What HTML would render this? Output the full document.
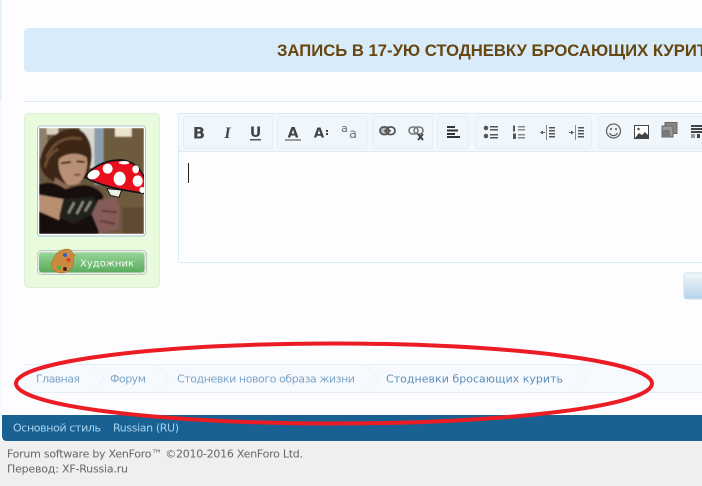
<!DOCTYPE html>
<html>
<head>
<meta charset="utf-8">
<style>
html,body{margin:0;padding:0;width:702px;height:486px;overflow:hidden;background:#fdfdff}
svg{display:block}
text{font-family:"DejaVu Sans","Liberation Sans",sans-serif}
</style>
</head>
<body>
<svg width="702" height="486" viewBox="0 0 702 486" xmlns="http://www.w3.org/2000/svg">
<defs>
<linearGradient id="send" x1="0" y1="0" x2="0" y2="1"><stop offset="0" stop-color="#f2f8fc"/><stop offset="1" stop-color="#b5d3ea"/></linearGradient>
<linearGradient id="grn" x1="0" y1="0" x2="0" y2="1"><stop offset="0" stop-color="#96d596"/><stop offset="1" stop-color="#59ab5c"/></linearGradient>
<clipPath id="ph"><rect x="12" y="12" width="315" height="318"/></clipPath>
<filter id="bl" x="-5%" y="-5%" width="110%" height="110%"><feGaussianBlur stdDeviation="2"/></filter>
</defs>

<rect width="702" height="486" fill="#fdfdff"/>
<rect x="0" y="0" width="2" height="100" fill="#e4f2fb"/>
<rect x="0" y="100" width="2" height="341" fill="#f3f9fd"/>

<!-- title -->
<rect x="24" y="28" width="690" height="44" rx="4" fill="#d7ebf9"/>
<text x="277" y="56" font-size="16.500" font-weight="bold" fill="#674610" style="font-family:'Liberation Sans',sans-serif" textLength="442" lengthAdjust="spacingAndGlyphs">ЗАПИСЬ В 17-УЮ СТОДНЕВКУ БРОСАЮЩИХ КУРИТЬ</text>
<rect x="24" y="101" width="678" height="1" fill="#dcedf8"/>

<!-- avatar panel -->
<rect x="24.500" y="113.500" width="135" height="174" rx="5" fill="#e8fbdc" stroke="#deefd8"/>
<rect x="37.500" y="126" width="108" height="110" rx="3" fill="#fff" stroke="#a9c4d8"/>
<g transform="translate(35,124) scale(.33333)">
<g clip-path="url(#ph)">
<g filter="url(#bl)">
<rect x="12" y="12" width="315" height="318" fill="#67553c"/>
<rect x="12" y="12" width="25" height="90" fill="#8f7f68"/>
<rect x="35" y="12" width="35" height="20" fill="#d8d0bd"/>
<rect x="135" y="12" width="50" height="120" fill="#dcd9d0"/>
<rect x="178" y="12" width="28" height="170" fill="#8c9eac"/>
<rect x="206" y="12" width="121" height="318" fill="#6e5a3e"/>
<rect x="240" y="12" width="50" height="26" fill="#ece3cb"/>
<path d="M16 110C20 55 70 12 120 14C150 16 172 55 170 100C168 140 150 170 130 180L60 175C30 160 14 140 16 110Z" fill="#3c2718"/>
<path d="M35 100C55 55 90 35 140 45M30 130C35 100 50 85 70 75" stroke="#6c4d33" stroke-width="8" fill="none"/>
<path d="M72 105C95 85 130 85 155 100C160 130 150 165 130 180L100 185C80 165 66 135 72 105Z" fill="#b98f74"/>
<path d="M78 118l30-4M125 112l24 2" stroke="#3f2719" stroke-width="6"/>
<path d="M118 152l18 0" stroke="#7c4a3f" stroke-width="6"/>
<path d="M60 160L105 190L95 205L55 190Z" fill="#8f6a55"/>
<path d="M12 182C40 170 70 178 90 195L130 185C160 180 190 190 205 215L190 330H12Z" fill="#14110c"/>
<path d="M12 212L90 226L72 288L12 262Z" fill="#b98f72"/>
<path d="M85 226L178 218L185 245L170 270L115 300L72 280Z" fill="#22211c"/>
<path d="M100 268L118 235M125 270L145 232M150 262L168 232" stroke="#8d8e7f" stroke-width="7"/>
<path d="M190 228L245 220L255 260L250 315L195 330L170 270Z" fill="#865b58"/>
<path d="M200 260L245 265M195 290L240 300" stroke="#5a3a38" stroke-width="6"/>
<rect x="262" y="250" width="65" height="80" fill="#5f4c35"/>
</g>
<path d="M216 194L260 198L252 220L226 214Z" fill="#eef2e6" stroke="#1a1a1a" stroke-width="3"/>
<path d="M150 160C165 135 205 108 255 108C300 110 325 135 345 210C300 205 210 192 150 160Z" fill="#e8101c" stroke="#141414" stroke-width="5"/>
<ellipse cx="176" cy="152" rx="19" ry="13" fill="#fff" transform="rotate(-25 176 152)"/>
<ellipse cx="218" cy="134" rx="15" ry="15" fill="#fff"/>
<ellipse cx="254" cy="164" rx="18" ry="21" fill="#fff"/>
<ellipse cx="308" cy="171" rx="15" ry="17" fill="#fff"/>
<ellipse cx="302" cy="136" rx="10" ry="12" fill="#fff"/>
<ellipse cx="267" cy="116" rx="16" ry="5" fill="#fff"/>
<ellipse cx="322" cy="198" rx="9" ry="9" fill="#fff"/>
</g>
</g>

<!-- artist badge -->
<rect x="37.500" y="250.500" width="109" height="24" rx="4" fill="#e6eae4" stroke="#c3c9c3"/>
<rect x="39" y="252.500" width="105.500" height="20" rx="3" fill="url(#grn)"/>
<path d="M62 250C70 247 74 252 72 254C78 254 73 258 73 258C75 266 70 273 61 273C52 272 49 266 53 260C55 255 57 252 62 250Z" fill="#cb8a3e" stroke="#a8702e" stroke-width=".6"/>
<circle cx="65" cy="255" r="2" fill="#3a5ec0"/>
<circle cx="68.500" cy="260" r="2" fill="#dd3d34"/>
<circle cx="59" cy="267.500" r="2" fill="#44b84a"/>
<circle cx="65" cy="269" r="2" fill="#3a2a1e"/>
<text x="80" y="266.500" font-size="10" fill="#f4fbf4" textLength="54" lengthAdjust="spacing">Художник</text>

<!-- editor -->
<rect x="178.500" y="113.500" width="530" height="149" rx="2" fill="#fdfdff" stroke="#dcecf7"/>
<rect x="179" y="114" width="523" height="37" fill="#f3f8fd"/>
<rect x="179" y="151" width="523" height="1" fill="#dcecf7"/>
<g fill="#f0f7fc" stroke="#e2eff8">
<rect x="183.500" y="116.500" width="89" height="32" rx="3"/>
<rect x="277.500" y="116.500" width="89.500" height="32" rx="3"/>
<rect x="372.500" y="116.500" width="60" height="32" rx="3"/>
<rect x="437.500" y="116.500" width="31" height="32" rx="3"/>
<rect x="475.500" y="116.500" width="116" height="32" rx="3"/>
<rect x="598.500" y="116.500" width="120" height="32" rx="3"/>
</g>
<rect x="188" y="163" width="1" height="20" fill="#222"/>

<!-- toolbar icons -->
<g fill="#444">
<text x="199" y="138.500" font-size="16" font-weight="bold" text-anchor="middle">B</text>
<text x="227.500" y="138" font-size="16" font-weight="bold" font-style="italic" text-anchor="middle" style="font-family:'Liberation Serif',serif">I</text>
<text x="255.500" y="137" font-size="14" font-weight="bold" text-anchor="middle">U</text>
<rect x="250" y="139" width="11" height="1.500" fill="#555"/>
<text x="293" y="137.500" font-size="14" font-weight="bold" text-anchor="middle">A</text>
<rect x="285" y="139" width="16" height="2" fill="#999"/>
<text x="319" y="137.500" font-size="13.500" font-weight="bold" text-anchor="middle">A</text>
<rect x="326" y="130" width="2" height="2"/><rect x="326" y="133" width="2" height="2"/>
<text x="344.500" y="132" font-size="11" text-anchor="middle" fill="#666">a</text>
<text x="353" y="138" font-size="13" text-anchor="middle" fill="#777">a</text>
</g>
<g fill="none">
<rect x="380" y="127" width="9" height="7.500" rx="3.700" stroke="#555" stroke-width="1.800" fill="#bbb"/>
<rect x="386" y="127" width="9" height="7.500" rx="3.700" stroke="#555" stroke-width="1.800"/>
<path d="M384 130.800h7" stroke="#555" stroke-width="1.500"/>
<rect x="409" y="127" width="9" height="7" rx="3.500" stroke="#777" stroke-width="1.600"/>
<rect x="414" y="127" width="9" height="7" rx="3.500" stroke="#777" stroke-width="1.600"/>
<path d="M418 134l5 6M423 134l-5 6" stroke="#444" stroke-width="2"/>
</g>
<g fill="#333">
<rect x="447" y="126" width="8" height="2"/><rect x="447" y="129.500" width="11" height="2"/>
<rect x="447" y="133" width="8" height="2"/><rect x="447" y="136" width="13" height="2"/>
</g>
<g fill="#555">
<circle cx="486" cy="128" r="2.300"/><circle cx="486" cy="136" r="2.300"/>
<rect x="490" y="126" width="8" height="1.500"/><rect x="490" y="129" width="8" height="1.500"/>
<rect x="490" y="134" width="8" height="1.500"/><rect x="490" y="137" width="8" height="1.500"/>
<rect x="513" y="125.500" width="2" height="6"/><rect x="513" y="133.500" width="3" height="5.500"/>
<rect x="518" y="126" width="7" height="1.500" fill="#888"/><rect x="518" y="129" width="7" height="1.500" fill="#888"/>
<rect x="518" y="134" width="7" height="1.500" fill="#888"/><rect x="518" y="137" width="7" height="1.500" fill="#888"/>
<rect x="546" y="125" width="1" height="15" fill="#888"/>
<rect x="549" y="127" width="6" height="1.500"/><rect x="549" y="130" width="6" height="1.500"/><rect x="549" y="133" width="6" height="1.500"/><rect x="549" y="136" width="6" height="1.500"/>
<path d="M540 132.500l3-2v1.500h2v1h-2v1.500z"/>
<rect x="575" y="125" width="1" height="15" fill="#888"/>
<rect x="578" y="127" width="6" height="1.500"/><rect x="578" y="130" width="6" height="1.500"/><rect x="578" y="133" width="6" height="1.500"/><rect x="578" y="136" width="6" height="1.500"/>
<path d="M574 132.500l-3-2v1.500h-2v1h2v1.500z"/>
</g>
<g>
<circle cx="613.500" cy="131" r="7" fill="#eef2f5" stroke="#666" stroke-width="1.300"/>
<circle cx="611" cy="129" r="1" fill="#555"/><circle cx="616" cy="129" r="1" fill="#555"/>
<path d="M609.500 133c2 3.500 6 3.500 8 0" fill="none" stroke="#555" stroke-width="1.200"/>
<rect x="634.500" y="125.500" width="14" height="13" fill="#fff" stroke="#444"/>
<path d="M635 138l4-5 3 2 3-3 3 3v3z" fill="#444"/>
<circle cx="638.500" cy="129" r="1.300" fill="#555"/>
<rect x="665" y="122.500" width="12" height="11" fill="#888" stroke="#666"/>
<rect x="662" y="126" width="11" height="11" fill="#999" stroke="#666"/>
<rect x="662" y="130" width="8" height="7" fill="#777"/>
<rect x="691" y="125" width="11" height="2" fill="#444"/>
<rect x="691" y="128" width="11" height="2" fill="#444"/>
<rect x="691" y="131" width="11" height="2" fill="#444"/>
<rect x="691" y="134" width="4" height="4" fill="#999"/>
<rect x="697" y="134" width="3" height="4" fill="#444"/>
</g>

<!-- send button -->
<rect x="684" y="273" width="30" height="26" rx="3" fill="url(#send)" stroke="#d0dfeb"/>

<!-- breadcrumb -->
<rect x="24" y="364" width="678" height="28" rx="4" fill="#f6fafe"/>
<rect x="24" y="364" width="678" height="1" fill="#e8f1f9"/>
<rect x="24" y="392" width="678" height="1" fill="#e4eef7"/>
<g fill="none" stroke="#edf4fa" stroke-width="1">
<path d="M92 365L104 378L92 391"/>
<path d="M157 365L169 378L157 391"/>
<path d="M366 365L378 378L366 391"/>
<path d="M575 365L587 378L575 391"/>
</g>
<text x="36" y="382.500" font-size="11" fill="#7fa4c6" textLength="44" lengthAdjust="spacing">Главная</text>
<text x="110" y="382.500" font-size="11" fill="#7fa4c6" textLength="36" lengthAdjust="spacing">Форум</text>
<text x="177" y="382.500" font-size="11" fill="#7fa4c6" textLength="178" lengthAdjust="spacing">Стодневки нового образа жизни</text>
<text x="386" y="382.500" font-size="11" fill="#5f8db3" textLength="177" lengthAdjust="spacing">Стодневки бросающих курить</text>

<!-- footer -->
<rect x="0" y="441" width="702" height="45" fill="#efefef"/>
<path d="M2 415H702V441H7Q2 441 2 436Z" fill="#196193"/>
<text x="13" y="431.500" font-size="11" fill="#a9d3ef" textLength="88" lengthAdjust="spacing">Основной стиль</text>
<text x="113" y="431.500" font-size="11" fill="#a9d3ef" textLength="66" lengthAdjust="spacing">Russian (RU)</text>
<text x="7" y="457.500" font-size="11" fill="#666" textLength="296" lengthAdjust="spacing">Forum software by XenForo™ ©2010-2016 XenForo Ltd.</text>
<text x="7" y="472.500" font-size="11" fill="#666" textLength="121" lengthAdjust="spacing">Перевод: XF-Russia.ru</text>

<!-- red annotation -->
<ellipse cx="334" cy="383.500" rx="318" ry="40" fill="none" stroke="#ec1c24" stroke-width="4"/>
</svg>
</body>
</html>
